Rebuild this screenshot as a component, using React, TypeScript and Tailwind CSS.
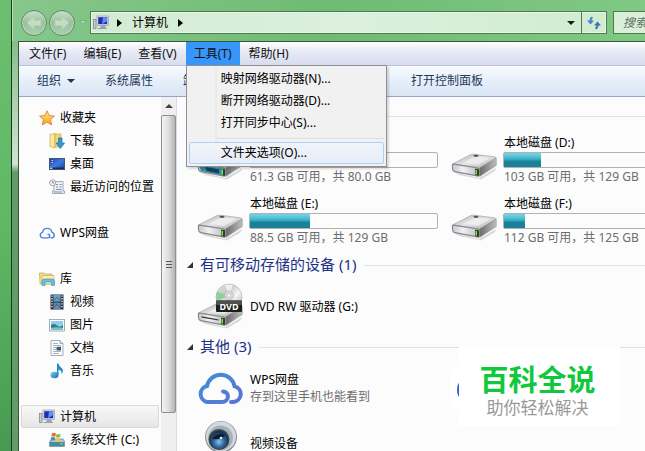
import { useState, type ReactNode } from "react";

interface Drive {
    name: string;
    info: string;
    used: number;
    system?: boolean;
}

interface NavItem {
    label: string;
    icon: ReactNode;
    root?: boolean;
    active?: boolean;
}

const drives: Drive[] = [
    { name: "系统文件 (C:)", info: "61.3 GB 可用，共 80.0 GB", used: 23, system: true },
    { name: "本地磁盘 (D:)", info: "103 GB 可用，共 129 GB", used: 20 },
    { name: "本地磁盘 (E:)", info: "88.5 GB 可用，共 129 GB", used: 32 },
    { name: "本地磁盘 (F:)", info: "112 GB 可用，共 125 GB", used: 11 },
];

const toolMenu = ["映射网络驱动器(N)...", "断开网络驱动器(D)...", "打开同步中心(S)..."];

function Gradients() {
    return (
        <svg className="absolute size-0" aria-hidden="true">
            <defs>
                <linearGradient id="metal" x1="0" y1="0" x2="1" y2="1">
                    <stop offset="0" stopColor="#b4b4b4" />
                    <stop offset=".5" stopColor="#e4e4e4" />
                    <stop offset="1" stopColor="#a8a8a8" />
                </linearGradient>
                <linearGradient id="front" x1="0" y1="0" x2="1" y2="0">
                    <stop offset="0" stopColor="#c9c9cf" />
                    <stop offset=".4" stopColor="#f0f0f8" />
                    <stop offset="1" stopColor="#c0c0c6" />
                </linearGradient>
                <linearGradient id="side" x1="0" y1="0" x2="1" y2="0">
                    <stop offset="0" stopColor="#6a6a6a" />
                    <stop offset="1" stopColor="#bdbdbd" />
                </linearGradient>
                <linearGradient id="star" x1="0" y1="0" x2="0" y2="1">
                    <stop offset="0" stopColor="#ffe98a" />
                    <stop offset="1" stopColor="#f7a21c" />
                </linearGradient>
                <linearGradient id="screen" x1="0" y1="0" x2="1" y2="1">
                    <stop offset="0" stopColor="#1b3fa8" />
                    <stop offset=".5" stopColor="#3c7be0" />
                    <stop offset="1" stopColor="#1a3f9a" />
                </linearGradient>
                <linearGradient id="disc" x1="0" y1="0" x2="1" y2="1">
                    <stop offset="0" stopColor="#e9e9e9" />
                    <stop offset=".35" stopColor="#c5cbc5" />
                    <stop offset=".6" stopColor="#f5f5f5" />
                    <stop offset="1" stopColor="#a9a9a9" />
                </linearGradient>
                <linearGradient id="cloud" x1="0" y1="0" x2="1" y2="1">
                    <stop offset="0" stopColor="#3f8fd8" />
                    <stop offset="1" stopColor="#5a74d8" />
                </linearGradient>
                <radialGradient id="lens" cx=".5" cy=".6" r=".6">
                    <stop offset="0" stopColor="#8fc0ec" />
                    <stop offset=".5" stopColor="#2f689f" />
                    <stop offset="1" stopColor="#10243b" />
                </radialGradient>
                <linearGradient id="note" x1="0" y1="0" x2="1" y2="1">
                    <stop offset="0" stopColor="#7fd0f2" />
                    <stop offset="1" stopColor="#0d6cae" />
                </linearGradient>
            </defs>
        </svg>
    );
}

function DriveBody() {
    return (
        <>
            <path d="M3 20 L28 26 L45 16 L44 19 L30 27.500 L8 23Z" fill="#888" opacity=".3" />
            <path d="M1.500 12 L19 3 Q21 2 23 2.200 L43 4.800 Q45.500 5.200 44.500 6.500 L28.500 16.200Z" fill="url(#metal)" stroke="#a2a2a2" strokeWidth=".7" />
            <path d="M12 10.500 L24 4.500 L39 6.300 L27 13Z" fill="#f4f4f4" opacity=".65" />
            <ellipse cx="25" cy="3.800" rx="2.600" ry="1.100" fill="#555" />
            <path d="M28.500 16 L45.300 6 V13.500 L29 24.300Z" fill="url(#side)" stroke="#8c8c8c" strokeWidth=".5" />
            <path d="M.800 13.300 Q.800 11.300 3 11.600 L26 15.200 Q29 15.800 29 17.800 V23 Q29 25.200 27 24.800 L3.500 20.200 Q1.300 19.600 1 17.500Z" fill="#8a8a8a" />
            <path d="M2 14 Q2 12.700 3.600 12.900 L25 16.300 Q26.500 16.700 26.500 18 V23.200 L4 19 Q2.300 18.500 2.200 17.500Z" fill="url(#front)" />
            <path d="M24 16.800 L28 17.600 V24 L24 23Z" fill="#24451a" />
            <rect x="24.500" y="18" width="1.500" height="4.500" fill="#8be04a" />
        </>
    );
}

function DriveIcon({ system }: { system?: boolean }) {
    return (
        <svg viewBox="0 0 46 32" className="h-8 w-[46px]" aria-hidden="true">
            <DriveBody />
            {system && (
                <>
                    <path d="M2 13 L26 16.500 V23.500 L4 19Z" fill="#2d8f9d" />
                    <path d="M8 15 L22 17.500 V21.500 L10 19Z" fill="#173d63" />
                    <rect x="24.500" y="18" width="1.500" height="4.500" fill="#8be04a" />
                </>
            )}
        </svg>
    );
}

function DvdIcon() {
    return (
        <svg viewBox="0 0 46 46" className="size-[46px]" aria-hidden="true">
            <g transform="translate(0 18)">
                <DriveBody />
                <path d="M4.500 15.800 L21.500 19" stroke="#333" strokeWidth="1.200" />
            </g>
            <circle cx="32" cy="14" r="13" fill="url(#disc)" stroke="#b5b5b5" strokeWidth=".7" />
            <path d="M32 13.500 L20.500 8.500 Q18.500 12 19.500 17Z" fill="#7ccf91" opacity=".8" />
            <path d="M32 13.500 L28 1.800 L36 1.800Z" fill="#fff" opacity=".7" />
            <circle cx="32" cy="12.500" r="4.500" fill="#dcdcdc" stroke="#aaa" strokeWidth=".7" />
            <circle cx="32" cy="12.500" r="1.800" fill="#fff" stroke="#999" strokeWidth=".5" />
            <rect x="19" y="17.500" width="26" height="11.500" rx="1" fill="#1d1d1d" />
            <rect x="19" y="17.500" width="26" height="4.500" rx="1" fill="#505050" />
            <text x="32" y="26.500" textAnchor="middle" fontSize="9" fontWeight="700" fill="#fff">DVD</text>
        </svg>
    );
}

function CloudIcon({ className }: { className: string }) {
    return (
        <svg viewBox="0 0 46 34" className={className} fill="none" stroke="url(#cloud)" strokeWidth="4" strokeLinecap="round" aria-hidden="true">
            <path d="M34 31 H36 A8 8 0 0 0 37.500 15.200 A14 14 0 0 0 10 15 A8.200 8.200 0 0 0 10 31 H25 A6 6 0 0 0 31 25 A5.500 5.500 0 0 0 26 20.500" />
        </svg>
    );
}

function WebcamIcon() {
    return (
        <svg viewBox="0 0 46 46" className="size-[46px]" aria-hidden="true">
            <path d="M11 37 Q23 32 36 37 L39 44 Q23 49 8 44Z" fill="#8d949a" />
            <circle cx="24" cy="17" r="16" fill="#89939b" />
            <circle cx="24" cy="16.500" r="15" fill="#d3dade" />
            <circle cx="23.500" cy="18" r="12.500" fill="#a5b1b9" />
            <circle cx="22" cy="19.500" r="10.500" fill="#39444e" />
            <circle cx="22" cy="20" r="9" fill="url(#lens)" />
            <path d="M15 19 Q20 12 28 15 Q25 20 15 19Z" fill="#0e1d2c" />
            <circle cx="24" cy="18" r="1.300" fill="#d8ecff" />
        </svg>
    );
}

function BadgeIcon() {
    return (
        <svg viewBox="0 0 46 46" className="size-[46px]" aria-hidden="true">
            <rect x="0" y="0" width="46" height="46" rx="8" fill="#fff" />
            <circle cx="20" cy="25" r="14" fill="#3c63c8" />
        </svg>
    );
}

function ComputerIcon() {
    return (
        <svg viewBox="0 0 16 16" className="size-4" aria-hidden="true">
            <rect x=".500" y="4.500" width="2.500" height="9" fill="#c8cdd2" stroke="#767d85" strokeWidth=".7" />
            <rect x="4" y="1" width="11.500" height="9.500" fill="#dfe4ea" stroke="#8a919c" strokeWidth=".6" />
            <rect x="5.200" y="2.200" width="9" height="7" fill="#1c2fb4" />
            <path d="M10 2.200 H14.200 V6 L9 9.200Z" fill="#6a8cf0" />
            <path d="M8 10.500 H12 L13 13 H7Z" fill="#9aa1aa" />
            <path d="M4.500 13.500 H14" stroke="#9aa1aa" />
        </svg>
    );
}

function StarIcon() {
    return (
        <svg viewBox="0 0 16 16" className="size-4" aria-hidden="true">
            <path d="M8 .8 L10.200 5.600 L15.400 6.100 L11.500 9.600 L12.700 14.900 L8 12.100 L3.300 14.900 L4.500 9.600 L.600 6.100 L5.800 5.600Z" fill="url(#star)" stroke="#e0812a" strokeWidth=".9" strokeLinejoin="round" />
        </svg>
    );
}

function DownloadIcon() {
    return (
        <svg viewBox="0 0 16 16" className="size-4" aria-hidden="true">
            <path d="M1 1.500 L6 .500 V15 L1 13.500Z" fill="#fbeaa0" stroke="#c9a94c" strokeWidth=".7" />
            <path d="M6 1 H12 V14 H6Z" fill="#f0d573" stroke="#c9a94c" strokeWidth=".7" />
            <path d="M9.500 5 H13 V10 H15.500 L11.300 15.500 L7 10 H9.500Z" fill="#2f9ad6" stroke="#1c6ea5" strokeWidth=".7" />
        </svg>
    );
}

function DesktopIcon() {
    return (
        <svg viewBox="0 0 16 16" className="size-4" aria-hidden="true">
            <rect x=".500" y="2.500" width="15" height="11" fill="url(#screen)" stroke="#48566e" />
            <rect x="1" y="11.500" width="14" height="1.500" fill="#1b2c4a" />
            <rect x="1" y="11.500" width="2.500" height="1.500" fill="#7fd4f7" />
            <path d="M2.500 4.500h1.500M2.500 6.500h1.500" stroke="#cfe3ff" strokeWidth=".8" />
        </svg>
    );
}

function RecentIcon() {
    return (
        <svg viewBox="0 0 16 16" className="size-4" aria-hidden="true">
            <path d="M5 2.500 H14 V12 H15.500 V14.500 H3.500 V12 H5Z" fill="#eef1f4" stroke="#8d98a3" strokeWidth=".8" />
            <path d="M7 5.500h2M10.500 5.500h2M7 8h2M10.500 8h2M7 10.500h5.500M5 13h8" stroke="#6788ab" strokeWidth=".9" />
            <circle cx="3.700" cy="3.800" r="3" fill="#f6f6f6" stroke="#8c8c8c" strokeWidth=".8" />
            <path d="M3.700 2v2h1.500" stroke="#555" strokeWidth=".7" fill="none" />
        </svg>
    );
}

function LibraryIcon() {
    return (
        <svg viewBox="0 0 16 16" className="size-4" aria-hidden="true">
            <path d="M.500 2 H5 L6 3 H13 V13 H1Z" fill="#f2dc88" stroke="#c8a850" strokeWidth=".7" />
            <path d="M3 4.500 H15 V13 H3Z" fill="#faeeb4" stroke="#cbb05c" strokeWidth=".7" />
            <path d="M3 14.500 V10.500 Q3 8 5.500 8 H13 Q15.500 8 15.500 10.500 V14.500 H12.500 V11 H6 V14.500Z" fill="#6dbede" stroke="#3a89b4" strokeWidth=".6" />
        </svg>
    );
}

function VideoIcon() {
    return (
        <svg viewBox="0 0 16 16" className="size-4" aria-hidden="true">
            <rect x="1.500" y=".500" width="13" height="15" fill="#2a2f38" />
            <rect x="4.500" y="1" width="7" height="6.500" fill="#5aa7cf" />
            <rect x="4.500" y="8.500" width="7" height="6.500" fill="#4691bd" />
            <path d="M5 6 L8 3.500 L11 6 M5 13.500 L8 10 L11 13" stroke="#a63c4c" fill="none" />
            <path d="M3 1.500v13M13 1.500v13" stroke="#f2f2f2" strokeWidth="1.300" strokeDasharray="1.300 1.300" />
        </svg>
    );
}

function PictureIcon() {
    return (
        <svg viewBox="0 0 16 16" className="size-4" aria-hidden="true">
            <rect x=".500" y="2.500" width="15" height="11.500" fill="#fff" stroke="#8f9aa5" strokeWidth=".8" />
            <rect x="2" y="4" width="12" height="8.500" fill="#8fcdf0" />
            <path d="M2 8 Q5 6 8 8.500 T14 8 V12.500 H2Z" fill="#2f7f78" />
            <path d="M2 10.800 Q8 9.500 14 11 V12.500 H2Z" fill="#7cc4d8" />
        </svg>
    );
}

function DocumentIcon() {
    return (
        <svg viewBox="0 0 16 16" className="size-4" aria-hidden="true">
            <path d="M2 .500 H11 L14 3.500 V15.500 H2Z" fill="#fcfcfd" stroke="#8e99a6" strokeWidth=".8" />
            <path d="M11 .500 V3.500 H14" fill="#dde3ea" stroke="#8e99a6" strokeWidth=".8" />
            <path d="M4 3.500h5M4 5.500h8M4 7.500h3M4 9.500h3M4 11.500h8M4 13.500h6" stroke="#8ba3bd" strokeWidth=".8" />
            <rect x="7.500" y="6.800" width="4.500" height="3.700" fill="#3a5673" />
        </svg>
    );
}

function MusicIcon() {
    return (
        <svg viewBox="0 0 16 16" className="size-4" aria-hidden="true">
            <ellipse cx="5.500" cy="12" rx="4" ry="3.300" fill="url(#note)" />
            <path d="M8 12 V.500 H9.500 Q10 3.500 12.500 5 Q15.500 7.500 12.500 11.500 Q13.500 7.500 9.500 6.500 V12Z" fill="#2389c4" />
        </svg>
    );
}

function SystemDriveIcon() {
    return (
        <svg viewBox="0 0 16 16" className="size-4" aria-hidden="true">
            <path d="M.500 9.500 L4 7 H14 L15.500 9.500 V14.500 H.500Z" fill="#b9c7ce" stroke="#6d7c86" strokeWidth=".7" />
            <rect x="1" y="10" width="14" height="4" fill="#418fa5" />
            <rect x="11.500" y="11" width="2" height="1.500" fill="#9de04d" />
            <path d="M3 1.500 Q5 .200 7 1.500 L6.300 4.800 Q4.500 3.600 2.300 4.800Z" fill="#ee6a2c" />
            <path d="M7.600 1.800 Q9.500 3 11.700 1.800 L11 5 Q9 6.200 7 5Z" fill="#7cc141" />
            <path d="M2.100 5.500 Q4.300 4.400 6.100 5.500 L5.400 8.800 Q3.500 7.700 1.400 8.800Z" fill="#3c8be0" />
            <path d="M6.800 5.800 Q8.800 7 10.800 5.800 L10.100 9 Q8 10.200 6.100 9Z" fill="#fbc52e" />
        </svg>
    );
}

const navGroups: NavItem[][] = [
    [
        { label: "收藏夹", icon: <StarIcon />, root: true },
        { label: "下载", icon: <DownloadIcon /> },
        { label: "桌面", icon: <DesktopIcon /> },
        { label: "最近访问的位置", icon: <RecentIcon /> },
    ],
    [{ label: "WPS网盘", icon: <CloudIcon className="h-3 w-4" />, root: true }],
    [
        { label: "库", icon: <LibraryIcon />, root: true },
        { label: "视频", icon: <VideoIcon /> },
        { label: "图片", icon: <PictureIcon /> },
        { label: "文档", icon: <DocumentIcon /> },
        { label: "音乐", icon: <MusicIcon /> },
    ],
    [
        { label: "计算机", icon: <ComputerIcon />, root: true, active: true },
        { label: "系统文件 (C:)", icon: <SystemDriveIcon /> },
    ],
];

function RoundArrow({ flip }: { flip?: boolean }) {
    return (
        <button
            type="button"
            aria-label={flip ? "前进" : "后退"}
            className="flex size-[26px] items-center justify-center rounded-full border border-[#5f8a64] bg-linear-to-b from-[#c9dfca] via-[#9abf9d] to-[#a9d2ac] shadow-[inset_0_0_0_1px_#bcdabe]"
        >
            <svg viewBox="0 0 16 16" className={flip ? "size-4 rotate-180" : "size-4"} aria-hidden="true">
                <path d="M1 8 L8 1.500 V5.300 H15 V10.700 H8 V14.500Z" fill="#c3dcc5" stroke="#b0cfb3" strokeWidth=".8" />
            </svg>
        </button>
    );
}

function TitleBar() {
    return (
        <div className="flex h-[41px] items-center pt-1 pl-[9px]">
            <div className="flex items-center gap-0.5">
                <RoundArrow />
                <RoundArrow flip />
                <button type="button" aria-label="历史记录" className="pl-0.5">
                    <svg viewBox="0 0 8 5" className="h-[5px] w-2" aria-hidden="true">
                        <path d="M.500 .500 H7.500 L4 4.500Z" fill="#a9d6aa" stroke="#6fa874" strokeWidth=".8" />
                    </svg>
                </button>
            </div>
            <div className="mr-1.5 ml-[3px] flex h-[23px] flex-1 border border-[#4b7d50] bg-linear-to-r from-[#d3ebd3] via-[#dcf0dc] to-[#d0ecd1] shadow-[inset_0_0_0_1px_#e8f6e8]">
                <div className="flex flex-1 items-center pl-0.5 text-black">
                    <ComputerIcon />
                    <span className="ml-2 border-y-[4px] border-l-[5px] border-y-transparent border-l-black" />
                    <button type="button" className="mx-2.5">计算机</button>
                    <span className="border-y-[4px] border-l-[5px] border-y-transparent border-l-black" />
                </div>
                <button type="button" aria-label="展开地址" className="flex w-5 items-center justify-center">
                    <span className="border-x-[4px] border-t-[4px] border-x-transparent border-t-[#0c2010]" />
                </button>
                <button type="button" aria-label="刷新" className="flex w-[25px] items-center justify-center border-l border-[#4b7d50]">
                    <svg viewBox="0 0 16 14" className="h-3.5 w-4" aria-hidden="true">
                        <path d="M6.500 1.500 Q4.500 2 4.500 5" fill="none" stroke="#4a80c4" strokeWidth="2" />
                        <path d="M1 4.500 H8 L4.500 8.500Z" fill="#4a80c4" />
                        <path d="M9.500 12.500 Q11.500 12 11.500 9" fill="none" stroke="#3d6fb6" strokeWidth="2" />
                        <path d="M8 9.500 H15 L11.500 5.500Z" fill="#3d6fb6" />
                    </svg>
                </button>
            </div>
            <input
                type="text"
                aria-label="搜索"
                placeholder="搜索 计算机"
                className="h-[23px] w-8 border border-r-0 border-[#4b7d50] bg-[#d9efd9] pl-[9px] italic outline-none placeholder:text-[#5f7262]"
            />
        </div>
    );
}

function ToolsMenu() {
    return (
        <div className="absolute top-full left-0 z-20 w-[201px] border border-[#8f8f96] bg-[#f1f1f1] p-0.5 text-black shadow-[2px_2px_2px_rgba(0,0,0,0.15)]">
            <div className="flex flex-col bg-linear-to-r from-[#f1f1f1] from-[26px] via-[#e2e3e3] via-[27px] to-[#f1f1f1] to-[28px]">
                {toolMenu.map((item) => (
                    <button key={item} type="button" className="h-[22px] pl-8 text-left">{item}</button>
                ))}
                <div className="flex h-2 items-center pl-7">
                    <div className="h-px flex-1 bg-[#dcdcdc]" />
                </div>
            </div>
            <button type="button" className="h-[22px] w-full rounded-xs border border-[#aecff7] bg-linear-to-b from-[#f1f4f9] to-[#e5edf8] pl-[31px] text-left">
                文件夹选项(O)...
            </button>
        </div>
    );
}

function MenuBar() {
    const [open, setOpen] = useState(true);

    return (
        <nav className="flex h-[23px] gap-px bg-linear-to-b from-white via-[#e8eaf6] via-40% to-[#d8dcee] pl-0.5 text-[#111]">
            <button type="button" className="px-2">文件(F)</button>
            <button type="button" className="px-2">编辑(E)</button>
            <button type="button" className="px-2">查看(V)</button>
            <div className="relative flex">
                <button type="button" className="bg-[#3896fa] px-2" onClick={() => setOpen(!open)}>工具(T)</button>
                {open && <ToolsMenu />}
            </div>
            <button type="button" className="px-2">帮助(H)</button>
        </nav>
    );
}

function Toolbar() {
    return (
        <div className="flex h-8 shrink-0 items-center gap-[30px] overflow-hidden border-t border-b border-t-[#b9c3d6] border-b-[#98a8c0] bg-linear-to-b from-[#f8fbfe] via-[#e6eff9] via-50% to-[#d9e6f5] pl-[18px] whitespace-nowrap text-[#1e395b]">
            <button type="button" className="flex items-center gap-1.5">
                组织
                <span className="border-x-[4px] border-t-[4px] border-x-transparent border-t-[#1e395b]" />
            </button>
            <button type="button">系统属性</button>
            <button type="button">卸载或更改程序</button>
            <button type="button">映射网络驱动器</button>
            <button type="button">打开控制面板</button>
        </div>
    );
}

function Sidebar() {
    return (
        <aside className="flex w-[158px] shrink-0 border-r border-[#d5dfeb]">
            <div className="flex min-w-0 flex-1 flex-col gap-[23px] pt-[9px]">
                {navGroups.map((group) => (
                    <ul key={group[0].label}>
                        {group.map(({ label, icon, root, active }) => (
                            <li key={label} className="px-0.5">
                                <a
                                    href="#"
                                    className={`flex h-[23px] items-center gap-[5px] rounded-xs border whitespace-nowrap text-black ${root ? "pl-[17px]" : "pl-[27px]"} ${active ? "border-[#d9d9d9] bg-linear-to-b from-[#f8f8f8] to-[#e6e6e6]" : "border-transparent"}`}
                                >
                                    {icon}
                                    {label}
                                </a>
                            </li>
                        ))}
                    </ul>
                ))}
            </div>
            <div className="flex w-[15px] shrink-0 flex-col bg-[#efefef]">
                <button type="button" aria-label="向上滚动" className="flex h-[18px] items-center justify-center">
                    <span className="border-x-[4px] border-b-[4px] border-x-transparent border-b-[#444]" />
                </button>
                <div className="flex h-[298px] flex-col items-center justify-center gap-0.5 rounded-xs border border-[#8f8f8f] bg-linear-to-r from-[#f4f4f4] via-[#dedede] to-[#b5b5b7]">
                    <span className="h-px w-1.5 bg-[#555]" />
                    <span className="h-px w-1.5 bg-[#555]" />
                    <span className="h-px w-1.5 bg-[#555]" />
                </div>
            </div>
        </aside>
    );
}

function Group({ title, children }: { title: string; children: ReactNode }) {
    return (
        <section>
            <h2 className="flex h-7 items-center pl-2.5 text-[15px] whitespace-nowrap text-[#1e3287]">
                <svg viewBox="0 0 6 6" className="mr-[7px] size-1.5" aria-hidden="true">
                    <path d="M6 0 V6 H0Z" fill="#333" />
                </svg>
                <span className="pb-0.5">{title}</span>
                <span className="ml-2 h-px flex-1 bg-[#dfe2e6]" />
            </h2>
            <div className="grid grid-cols-[254px_254px] gap-y-px pl-5">{children}</div>
        </section>
    );
}

function DriveTile({ drive }: { drive: Drive }) {
    return (
        <div className="flex h-[60px] gap-1.5 pt-1">
            <div className="pt-[18px]">
                <DriveIcon system={drive.system} />
            </div>
            <div className="w-[189px]">
                <div className="pl-px leading-[18px] text-black">{drive.name}</div>
                <div className="h-4 rounded-xs border border-[#b2b2b2] bg-[#fcfcfc]">
                    <div
                        className="h-full bg-linear-to-b from-[#6fcfe0] from-10% via-[#35b0c6] via-45% to-[#1b8199] to-60%"
                        style={{ width: `${drive.used}%` }}
                    />
                </div>
                <div className="pl-px leading-[18px] whitespace-nowrap text-[#6d6d6d]">{drive.info}</div>
            </div>
        </div>
    );
}

function DeviceTile({ icon, name, note }: { icon: ReactNode; name?: string; note?: string }) {
    return (
        <div className="flex h-[54px] items-center gap-[7px]">
            {icon}
            <div className="leading-[17px] text-black">
                {name}
                {note && <div className="text-[#6d6d6d]">{note}</div>}
            </div>
        </div>
    );
}

export default function App() {
    return (
        <div className="relative flex h-screen overflow-hidden bg-linear-to-b from-[#6cbf70] via-[#5fb865] to-[#479a50] font-['Noto_Sans','Noto_Sans_CJK_SC',sans-serif] text-xs">
            <Gradients />
            <div className="ml-[11px] flex min-w-0 flex-1 flex-col border-l border-[#1d3a20] bg-linear-to-r from-[#86c78b] via-[#6fbb73] to-[#80c985] shadow-[inset_1px_0_0_#b7dfba]">
                <TitleBar />
                <div className="flex min-h-0 flex-1">
                    <div className="w-1.5 shrink-0 bg-linear-to-b from-[#86bd8a] via-[#d0e4d2] via-30% to-[#629c69] to-32%" />
                    <div className="flex min-w-0 flex-1 flex-col border-t border-l border-[#35573a] bg-[#fcfcfc]">
                        <MenuBar />
                        <Toolbar />
                        <div className="flex min-h-0 flex-1 overflow-hidden">
                            <Sidebar />
                            <main className="min-w-0 flex-1 overflow-hidden pt-[5px]">
                                <Group title="硬盘 (4)">
                                    {drives.map((drive) => (
                                        <DriveTile key={drive.name} drive={drive} />
                                    ))}
                                </Group>
                                <Group title="有可移动存储的设备 (1)">
                                    <DeviceTile icon={<DvdIcon />} name="DVD RW 驱动器 (G:)" />
                                </Group>
                                <Group title="其他 (3)">
                                    <DeviceTile icon={<CloudIcon className="h-[34px] w-[46px]" />} name="WPS网盘" note="存到这里手机也能看到" />
                                    <DeviceTile icon={<BadgeIcon />} />
                                    <DeviceTile icon={<WebcamIcon />} name="视频设备" />
                                </Group>
                            </main>
                        </div>
                    </div>
                </div>
            </div>
            <div className="absolute right-[25px] bottom-[25px] flex h-[79px] w-[161px] flex-col items-center justify-center bg-white pt-1.5 pr-1">
                <strong className="text-[29px] leading-9 font-bold text-[#10c83c]">百科全说</strong>
                <span className="text-[17px] leading-5 text-[#999]">助你轻松解决</span>
            </div>
        </div>
    );
}
